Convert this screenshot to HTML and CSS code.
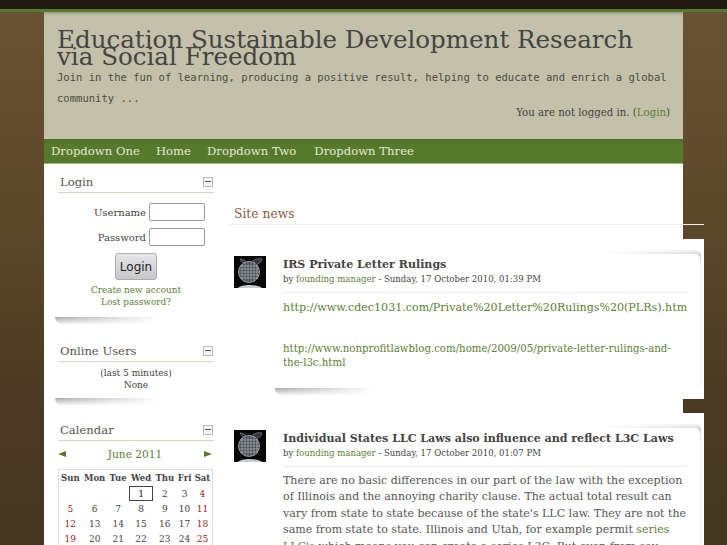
FILE: index.html
```html
<!DOCTYPE html>
<html lang="en">
<head>
    <meta charset="UTF-8">
    <meta name="viewport" content="width=device-width, initial-scale=1.0">
    <title>Education Sustainable Development Research via Social Freedom</title>
    <link rel="stylesheet" href="styles.css">
</head>
<body>
    <div class="topbar"></div>
    <div class="page">
        <header class="header">
            <h1 class="site-title">Education Sustainable Development Research via Social Freedom</h1>
            <p class="tagline">Join in the fun of learning, producing a positive result, helping to educate and enrich a global community ...</p>
            <p class="logininfo">You are not logged in. (<a href="#">Login</a>)</p>
        </header>
        <nav class="nav">
            <a href="#">Dropdown One</a>
            <a href="#">Home</a>
            <a href="#">Dropdown Two</a>
            <a href="#">Dropdown Three</a>
        </nav>
        <div class="columns">
            <aside class="sidebar">
                <section class="block block-login">
                    <div class="block-head"><h2>Login</h2><span class="toggle"></span></div>
                    <form class="login-form">
                        <label class="login-row">Username <input type="text"></label>
                        <label class="login-row">Password <input type="password"></label>
                        <button type="button" class="login-btn">Login</button>
                    </form>
                    <div class="login-links">
                        <a href="#">Create new account</a>
                        <a href="#">Lost password?</a>
                    </div>
                </section>
                <section class="block block-users">
                    <div class="block-head"><h2>Online Users</h2><span class="toggle"></span></div>
                    <div class="users">(last 5 minutes)<br>None</div>
                </section>
                <section class="block block-calendar">
                    <div class="block-head"><h2>Calendar</h2><span class="toggle"></span></div>
                    <div class="cal-month">
                        <span class="arrow arrow-left"></span>
                        <a href="#">June 2011</a>
                        <span class="arrow arrow-right"></span>
                    </div>
                    <table class="cal">
                        <tr><th>Sun</th><th>Mon</th><th>Tue</th><th>Wed</th><th>Thu</th><th>Fri</th><th>Sat</th></tr>
                        <tr><td></td><td></td><td></td><td class="today">1</td><td>2</td><td>3</td><td class="we">4</td></tr>
                        <tr><td class="we">5</td><td>6</td><td>7</td><td>8</td><td>9</td><td>10</td><td class="we">11</td></tr>
                        <tr><td class="we">12</td><td>13</td><td>14</td><td>15</td><td>16</td><td>17</td><td class="we">18</td></tr>
                        <tr><td class="we">19</td><td>20</td><td>21</td><td>22</td><td>23</td><td>24</td><td class="we">25</td></tr>
                    </table>
                </section>
            </aside>
            <main class="main">
                <h2 class="main-title">Site news</h2>
                <article class="post post-first">
                    <svg class="pic" viewBox="0 0 32 32" width="32" height="32">
                        <rect width="32" height="32" fill="#070707"/>
                        <path d="M16 8C19 3 25 2 28 3C27 8 21 10 16 8ZM14 8C12 5 9 3 6 3C8 7 10 8 14 8Z" fill="#33363c" stroke="#8f959d" stroke-width=".6"/>
                        <circle cx="15" cy="16" r="10.5" fill="#3f434a" stroke="#8f959d"/>
                        <path d="M6 10H24M5 13H25M5 16H25M5 19H25M6 22H24M8 8V24M11 6V26M14 6V26M17 6V26M20 6V26M23 9V23" stroke="#a8adb5" stroke-width=".8" fill="none"/>
                        <path d="M4 32C7 28 24 28 28 32Z" fill="#c8ccd0"/>
                    </svg>
                    <div class="card">
                        <div class="card-head">
                            <h3>IRS Private Letter Rulings</h3>
                            <div class="meta">by <a href="#">founding manager</a> - Sunday, 17 October 2010, 01:39 PM</div>
                        </div>
                        <div class="card-body">
                            <p class="big-link"><a href="#">http://www.cdec1031.com/Private%20Letter%20Rulings%20(PLRs).htm</a></p>
                            <p class="small-link"><a href="#">http://www.nonprofitlawblog.com/home/2009/05/private-letter-rulings-and-the-l3c.html</a></p>
                        </div>
                    </div>
                </article>
                <article class="post">
                    <svg class="pic" viewBox="0 0 32 32" width="32" height="32">
                        <rect width="32" height="32" fill="#070707"/>
                        <path d="M16 8C19 3 25 2 28 3C27 8 21 10 16 8ZM14 8C12 5 9 3 6 3C8 7 10 8 14 8Z" fill="#33363c" stroke="#8f959d" stroke-width=".6"/>
                        <circle cx="15" cy="16" r="10.5" fill="#3f434a" stroke="#8f959d"/>
                        <path d="M6 10H24M5 13H25M5 16H25M5 19H25M6 22H24M8 8V24M11 6V26M14 6V26M17 6V26M20 6V26M23 9V23" stroke="#a8adb5" stroke-width=".8" fill="none"/>
                        <path d="M4 32C7 28 24 28 28 32Z" fill="#c8ccd0"/>
                    </svg>
                    <div class="card">
                        <div class="card-head">
                            <h3>Individual States LLC Laws also influence and reflect L3C Laws</h3>
                            <div class="meta">by <a href="#">founding manager</a> - Sunday, 17 October 2010, 01:07 PM</div>
                        </div>
                        <div class="card-body">
                            <p class="text">There are no basic differences in our part of the law with the exception of Illinois and the annoying charity clause. The actual total result can vary from state to state because of the state's LLC law. They are not the same from state to state. Illinois and Utah, for example permit <a href="#">series LLC's</a> which means you can create a series L3C. But even from say</p>
                        </div>
                    </div>
                </article>
            </main>
        </div>
    </div>
</body>
</html>
```
FILE: styles.css
```css
* {
    margin: 0;
    padding: 0;
    box-sizing: border-box;
}

html, body {
    height: 545px;
    overflow: hidden;
}

body {
    background: linear-gradient(to bottom, #6a5332 0%, #5c4729 40%, #4a3a23 75%, #45361f 100%);
    font-family: "DejaVu Serif", serif;
    color: #444;
}

a {
    color: #5b7f33;
    text-decoration: none;
}

.topbar {
    height: 12px;
    background: #221a12;
    border-bottom: 3px solid #547a2c;
}

.page {
    width: 639px;
    margin-left: 44px;
    background: #fff;
    min-height: 533px;
}

/* header */
.header {
    height: 127px;
    background: #c3c1a9;
    box-shadow: inset 0 4px 3px -2px #a09e88;
    padding: 19px 13px 0 13px;
}

.site-title {
    font-size: 24.55px;
    line-height: 17px;
    font-weight: normal;
    color: #444;
}

.tagline {
    font-family: "DejaVu Sans Mono", monospace;
    font-size: 10.55px;
    line-height: 21px;
    color: #4c4c44;
    margin-top: 2px;
}

.logininfo {
    font-size: 10.2px;
    line-height: 14px;
    text-align: right;
    margin-top: -3px;
    color: #444;
}

.nav {
    height: 25px;
    background: linear-gradient(to bottom, #4c6e28 0, #557a2c 6px, #557a2c 100%);
    border-bottom: 1px solid #9fb083;
    display: flex;
    align-items: center;
    gap: 16px;
    padding-left: 7px;
}

.nav a {
    font-size: 11.65px;
    color: #e6e6d6;
}

.nav a:last-child {
    margin-left: 2px;
}

/* columns */
.columns {
    display: flex;
    align-items: flex-start;
}

.sidebar {
    width: 185px;
    flex-shrink: 0;
    padding: 9px 0 0 14px;
}

.block {
    position: relative;
    width: 156px;
    margin-bottom: 23px;
}

/* fading shadow under the left corner of a block */
.block::after {
    content: "";
    position: absolute;
    left: -3px;
    bottom: -8px;
    width: 104px;
    height: 8px;
    border-radius: 0 0 0 8px;
    background: linear-gradient(to bottom, rgba(255, 255, 255, 0), #fff), linear-gradient(to right, #a8a8a4, #fff);
}

.block-login {
    margin-bottom: 25px;
}

.block-head {
    display: flex;
    justify-content: space-between;
    align-items: center;
    height: 20px;
    padding: 0 1px 0 2px;
    border-bottom: 1px solid #d5d4c3;
}

.block-head h2 {
    font-size: 11.6px;
    font-weight: normal;
    color: #555;
    margin-bottom: 2px;
}

.toggle {
    width: 10px;
    height: 10px;
    border: 1px solid #bbb;
    background: linear-gradient(#555, #555) center / 6px 1px no-repeat #f4f4f4;
    margin-bottom: 2px;
}

.login-form {
    display: flex;
    flex-direction: column;
    align-items: center;
    padding-top: 10px;
    font-size: 10px;
}

.login-row {
    align-self: flex-end;
    display: flex;
    align-items: center;
    gap: 3px;
    margin: 0 9px 7px 0;
    color: #444;
}

.login-row input {
    width: 56px;
    height: 18px;
    border: 1px solid #999;
    border-radius: 2px;
    background: #fff;
}

.login-btn {
    width: 42px;
    height: 27px;
    border: 1px solid #aaa;
    border-radius: 3px;
    background: linear-gradient(#e6e6e8, #c8c8cc);
    font-family: "DejaVu Sans", sans-serif;
    font-size: 12px;
    color: #222;
}

.login-links {
    text-align: center;
    font-size: 8.9px;
    line-height: 12px;
    padding: 4px 0 9px;
}

.login-links a {
    display: block;
}

.users {
    text-align: center;
    font-size: 9px;
    line-height: 12px;
    padding: 5px 0 7px;
}

.block-calendar::after {
    display: none;
}

.cal-month {
    display: flex;
    justify-content: space-between;
    align-items: center;
    height: 25px;
    margin-bottom: 3px;
    padding-right: 2px;
    font-size: 10.6px;
}

.arrow {
    width: 0;
    height: 0;
    border-top: 3px solid transparent;
    border-bottom: 3px solid transparent;
}

.arrow-left {
    border-right: 8px solid #567a2e;
}

.arrow-right {
    border-left: 8px solid #567a2e;
}

.cal {
    width: 155px;
    border: 1px solid #ddd;
    border-collapse: separate;
    border-spacing: 0;
    font-size: 9px;
    text-align: center;
    color: #444;
}

.cal th {
    font-size: 8.5px;
    font-weight: bold;
    height: 16px;
}

.cal td {
    height: 15px;
}

.cal .we {
    color: #a01c1c;
}

.cal .today {
    border: 1px solid #444;
    color: #111;
}

/* main column */
.main {
    width: 475px;
    flex-shrink: 0;
    padding-top: 39px;
}

.main-title {
    font-size: 12.3px;
    line-height: 20px;
    padding: 1px 0 0 5px;
    font-weight: normal;
    color: #8e5a44;
    border-bottom: 1px solid #eeeeea;
}

.post {
    display: flex;
    align-items: flex-start;
    isolation: isolate;
    background: #fff;
    padding: 15px 4px 11px 5px;
    margin-top: 14px;
}

.post-first {
    height: 160px;
}

.pic {
    flex-shrink: 0;
    margin: 2px 9px 0 0;
}

.card {
    position: relative;
    flex: 1;
    min-width: 0;
    padding: 3px 13px 18px 8px;
    background: #fff;
    border-radius: 6px;
    box-shadow: 2px 0 2px -1px #eee;
}

/* fading shadow over the right corner of a post */
.card::before {
    content: "";
    position: absolute;
    right: -1px;
    top: -5px;
    width: 100px;
    height: 12px;
    border-radius: 0 6px 0 0;
    background: linear-gradient(to top, rgba(255, 255, 255, 0), #fff), linear-gradient(to left, #a4a4a0, #fff);
    z-index: -1;
}

.post-first .card::after {
    content: "";
    position: absolute;
    left: 0;
    bottom: -8px;
    width: 100px;
    height: 8px;
    border-radius: 0 0 0 8px;
    background: linear-gradient(to bottom, rgba(255, 255, 255, 0), #fff), linear-gradient(to right, #a8a8a4, #fff);
}

.card-head {
    padding-bottom: 6px;
    border-bottom: 1px solid #eeeeea;
}

.card-head h3 {
    font-size: 11.05px;
    line-height: 15px;
    color: #444;
}

.meta {
    font-size: 8.55px;
    line-height: 13px;
    margin-top: 1px;
    color: #444;
}

.card-body {
    padding-top: 7px;
}

.big-link {
    font-size: 11.08px;
    line-height: 16px;
}

.small-link {
    font-size: 10.2px;
    line-height: 14px;
    margin-top: 26px;
}

.text {
    font-size: 11.03px;
    line-height: 16.4px;
    margin-top: -1px;
    color: #555;
}
```
